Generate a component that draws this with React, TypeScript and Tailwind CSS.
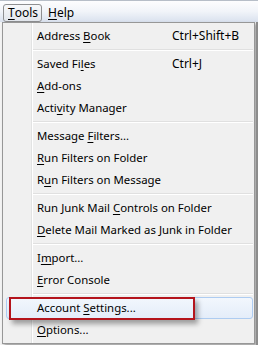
import type { ReactNode } from "react";

type Item = { label: ReactNode; shortcut?: string; active?: boolean };

// underline the access key
const u = (pre: string, key: string, post: string) => (
  <>
    {pre}
    <span className="underline underline-offset-[2px]">{key}</span>
    {post}
  </>
);

const groups: Item[][] = [
  [{ label: u("Address ", "B", "ook"), shortcut: "Ctrl+Shift+B" }],
  [
    { label: u("Saved Fi", "l", "es"), shortcut: "Ctrl+J" },
    { label: u("", "A", "dd-ons") },
    { label: u("Acti", "v", "ity Manager") },
  ],
  [
    { label: u("Message ", "F", "ilters...") },
    { label: u("", "R", "un Filters on Folder") },
    { label: u("R", "u", "n Filters on Message") },
  ],
  [
    { label: u("Run Junk Mail ", "C", "ontrols on Folder") },
    { label: u("", "D", "elete Mail Marked as Junk in Folder") },
  ],
  [{ label: u("I", "m", "port...") }, { label: u("", "E", "rror Console") }],
  [{ label: u("Account ", "S", "ettings..."), active: true }, { label: u("", "O", "ptions...") }],
];

function MenuRow({ item }: { item: Item }) {
  return (
    <div className="relative flex h-[22px] items-center pl-[31px] text-black">
      {item.active && (
        <>
          <div className="absolute inset-0 rounded-[3px] border border-[#aeccf1] bg-gradient-to-b from-[#f2f7fd] to-[#e4edf9]" />
          <div className="absolute left-[3px] top-0 h-[23px] w-[186px] border-2 border-[#b4141c] shadow-[3px_4px_5px_rgba(0,0,0,0.35)]" />
        </>
      )}
      <span className="relative w-[135px] whitespace-nowrap">{item.label}</span>
      {item.shortcut && <span className="relative whitespace-nowrap text-[12px]">{item.shortcut}</span>}
    </div>
  );
}

function Separator() {
  return (
    <div className="flex h-[6px] flex-col pt-[2px] pl-[27px]">
      <div className="h-px bg-[#e0e0e0]" />
      <div className="h-px bg-white" />
    </div>
  );
}

export default function App() {
  return (
    <div className="relative h-[345px] w-[258px] overflow-hidden bg-[#f4f4f4] font-['Noto_Sans',sans-serif] text-[11.4px] leading-none">
      {/* menu bar */}
      <div className="h-[22px] border-t border-[#b7bec8] bg-gradient-to-b from-[#fdfdfe] via-[#f1f4f9] to-[#d9e1ee] px-[3px] pt-[3px] text-[12px]">
        <div className="flex h-[18px] items-center">
          <div className="flex h-[18px] w-[39px] items-center rounded-[3px] border border-[#8e8f91] bg-gradient-to-b from-[#f7f8fa] to-[#e2e6ec] pl-[4px]">
            {u("", "T", "ools")}
          </div>
          <div className="ml-[6px] flex items-center">{u("", "H", "elp")}</div>
        </div>
      </div>

      {/* dropdown */}
      <div className="relative ml-[2px] w-[253px] border border-[#979797] bg-[#f0f0f0] pb-[2px] pl-[3px] pr-px pt-[2px] shadow-[2px_2px_3px_rgba(0,0,0,0.35)]">
        <div className="absolute bottom-0 left-[28px] top-0 w-px bg-[#e2e3e3]" />
        <div className="absolute bottom-0 left-[29px] top-0 w-px bg-white" />
        {groups.map((g, gi) => (
          <div key={gi}>
            {gi > 0 && <Separator />}
            {g.map((item, ii) => (
              <MenuRow key={ii} item={item} />
            ))}
          </div>
        ))}
      </div>

      <div className="absolute right-0 top-[22px] h-[323px] w-[2px] bg-[#8c8c8c]" />
    </div>
  );
}
